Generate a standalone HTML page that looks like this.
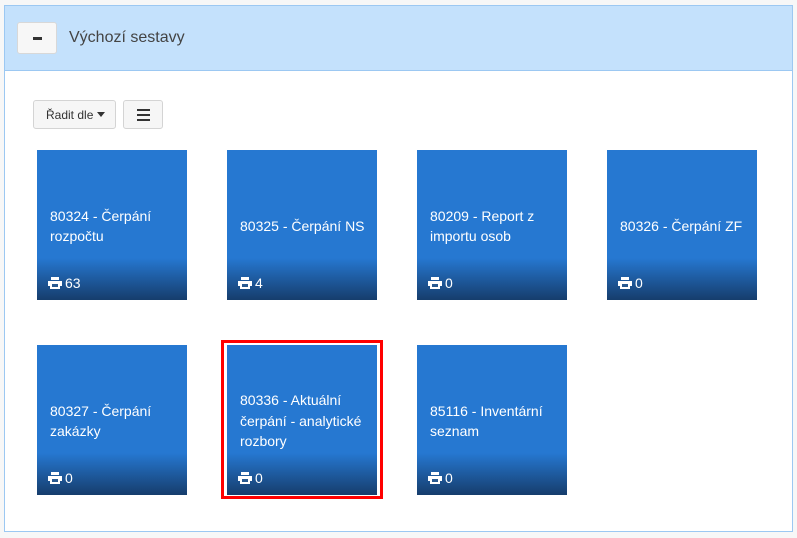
<!DOCTYPE html>
<html><head><meta charset="utf-8"><style>
body{margin:0;width:797px;height:538px;background:#f7f7f7;font-family:"Liberation Sans",sans-serif;position:relative;overflow:hidden}
.panel{position:absolute;left:4px;top:5px;width:787px;height:525px;border:1px solid #9cc8f2;background:#fff}
.hdr{height:64px;background:#c4e1fc;border-bottom:1px solid #9cc8f2;position:relative}
.min{position:absolute;left:12px;top:16px;width:38px;height:30px;background:#f7f7f7;border:1px solid #d8d8d8;border-radius:3px}
.min:after{content:"";position:absolute;left:15px;top:14px;width:9px;height:3px;background:#333}
.title{position:absolute;left:64px;top:23px;font-size:16px;color:#444}
.btn{position:absolute;top:94px;height:29px;background:#f6f6f6;border:1px solid #d4d4d4;border-radius:3px;box-sizing:border-box;font-size:12px;color:#333}
.tile{position:absolute;width:150px;height:150px;background:#2678d1;color:#fff;overflow:hidden}
.tile .g{position:absolute;left:0;right:0;bottom:0;height:42px;background:linear-gradient(#2678d1,#163d6c)}
.tile .t{position:absolute;left:13px;right:6px;top:2px;bottom:0;display:flex;align-items:center;font-size:14px;line-height:20.5px}
.tile .f{position:absolute;left:11px;bottom:9px;font-size:14px;display:flex;align-items:center;gap:3px}
.sel{position:absolute;left:221px;top:340px;width:156px;height:153px;border:3px solid #f00;background:#fff}
</style></head><body>
<div class="panel">
<div class="hdr"><div class="min"></div><div class="title">Výchozí sestavy</div></div>
<div class="btn" style="left:28px;width:83px;padding:7px 0 0 12px">Řadit dle <span style="display:inline-block;border-left:4px solid transparent;border-right:4px solid transparent;border-top:5px solid #333;vertical-align:2px"></span></div>
<div class="btn" style="left:118px;width:40px"><svg width="14" height="12" style="position:absolute;left:13px;top:8px"><rect y="0" width="13" height="2" fill="#333"/><rect y="5" width="13" height="2" fill="#333"/><rect y="10" width="13" height="2" fill="#333"/></svg></div>
</div>
<div class="sel"></div>
<svg width="0" height="0" style="position:absolute"><defs><symbol id="p" viewBox="0 0 14 12"><path d="M3 0h8v3H3z M0 4h14v5h-2v3H2V9H0z" fill="#fff"/><rect x="4" y="7" width="6" height="3" fill="#2a5a90"/></symbol></defs></svg>
<div class="tile" style="left:37px;top:150px"><div class="g"></div><div class="t">80324 - Čerpání rozpočtu</div><div class="f"><svg width="14" height="12"><use href="#p"/></svg>63</div></div>
<div class="tile" style="left:227px;top:150px"><div class="g"></div><div class="t">80325 - Čerpání NS</div><div class="f"><svg width="14" height="12"><use href="#p"/></svg>4</div></div>
<div class="tile" style="left:417px;top:150px"><div class="g"></div><div class="t">80209 - Report z importu osob</div><div class="f"><svg width="14" height="12"><use href="#p"/></svg>0</div></div>
<div class="tile" style="left:607px;top:150px"><div class="g"></div><div class="t">80326 - Čerpání ZF</div><div class="f"><svg width="14" height="12"><use href="#p"/></svg>0</div></div>
<div class="tile" style="left:37px;top:345px"><div class="g"></div><div class="t">80327 - Čerpání zakázky</div><div class="f"><svg width="14" height="12"><use href="#p"/></svg>0</div></div>
<div class="tile" style="left:227px;top:345px"><div class="g"></div><div class="t">80336 - Aktuální čerpání - analytické rozbory</div><div class="f"><svg width="14" height="12"><use href="#p"/></svg>0</div></div>
<div class="tile" style="left:417px;top:345px"><div class="g"></div><div class="t">85116 - Inventární seznam</div><div class="f"><svg width="14" height="12"><use href="#p"/></svg>0</div></div>
</body></html>
